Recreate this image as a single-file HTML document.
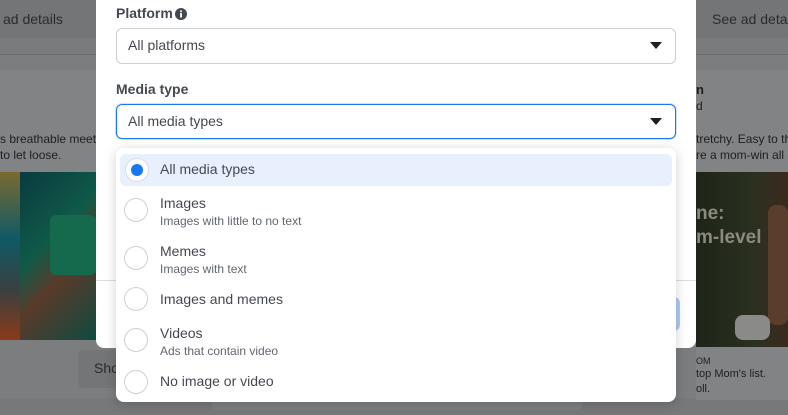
<!DOCTYPE html>
<html><head><meta charset="utf-8"><style>
*{box-sizing:border-box;margin:0;padding:0}
body{width:788px;height:415px;overflow:hidden;position:relative;background:#7c7d7e;font-family:"Liberation Sans",Arial,sans-serif;color:#1c1e21}
.abs{position:absolute}
.t{font-size:13px;color:#1c1e21;white-space:nowrap}
</style></head><body>
<div class="abs" style="left:0;top:0;width:96px;height:38px;background:#747576"></div>
<div class="abs t" style="left:3px;top:11px;font-size:14px;color:#2a2b2d">ad details</div>
<div class="abs" style="left:0;top:38px;width:96px;height:17px;background:#7a7b7c;border-bottom:1px solid #6c6d6e"></div>
<div class="abs" style="left:0;top:70px;width:96px;height:270px;background:#828384"></div>
<div class="abs t" style="left:0;top:132px;font-size:12px;color:#1e1f21">s breathable meet</div>
<div class="abs t" style="left:0;top:148px;font-size:12px;color:#1e1f21">to let loose.</div>
<div class="abs" style="left:0;top:172px;width:20px;height:168px;background:linear-gradient(#7a6a30,#0e5a66 40%,#3a4040 70%,#8a3a1a)"></div>
<div class="abs" style="left:20px;top:172px;width:76px;height:168px;background:linear-gradient(135deg,#0a3a40,#0f5a48 40%,#5a3a2a 60%,#0e4a40)"></div>
<div class="abs" style="left:50px;top:215px;width:46px;height:60px;background:#156a4d;border-radius:6px"></div>
<div class="abs" style="left:78px;top:350px;width:40px;height:38px;background:#747576;border-radius:6px"></div>
<div class="abs t" style="left:94px;top:360px;font-size:14px;color:#2a2b2d">Sho</div>
<div class="abs" style="left:0;top:398px;width:788px;height:17px;background:#777879"></div>
<div class="abs" style="left:696px;top:0;width:92px;height:38px;background:#747576"></div>
<div class="abs t" style="left:712px;top:11px;font-size:14px;color:#2a2b2d">See ad detai</div>
<div class="abs" style="left:696px;top:38px;width:92px;height:17px;background:#7a7b7c;border-bottom:1px solid #6c6d6e"></div>
<div class="abs" style="left:696px;top:70px;width:92px;height:330px;background:#828384"></div>
<div class="abs t" style="left:696px;top:82px;font-size:13px;font-weight:bold;color:#1e1f21">n</div>
<div class="abs t" style="left:696px;top:99px;font-size:12px;color:#1e1f21">d</div>
<div class="abs t" style="left:696px;top:132px;font-size:12px;color:#1e1f21">tretchy. Easy to th</div>
<div class="abs t" style="left:696px;top:148px;font-size:12px;color:#1e1f21">re a mom-win all a</div>
<div class="abs" style="left:696px;top:172px;width:92px;height:175px;background:linear-gradient(90deg,#1e2418,#2a3020 60%,#3a2a1e)"></div>
<div class="abs" style="left:768px;top:205px;width:20px;height:120px;background:#5a3e2c;border-radius:8px"></div>
<div class="abs" style="left:735px;top:315px;width:35px;height:25px;background:#8a8a88;border-radius:8px"></div>
<div class="abs t" style="left:696px;top:203px;font-size:19px;font-weight:bold;color:#8a8a80">ne:</div>
<div class="abs t" style="left:696px;top:227px;font-size:19px;font-weight:bold;color:#8a8a80">m-level</div>
<div class="abs t" style="left:696px;top:356px;font-size:9px;color:#1e1f21">OM</div>
<div class="abs t" style="left:696px;top:368px;font-size:11px;color:#1e1f21">top Mom's list.</div>
<div class="abs t" style="left:696px;top:383px;font-size:11px;color:#1e1f21">oll.</div>
<div class="abs" style="left:212px;top:398px;width:370px;height:12px;background:#7e7f80;border-radius:4px"></div>
<div class="abs" style="left:96px;top:0;width:600px;height:348px;background:#fff;border-radius:0 0 8px 8px"></div>
<div class="abs" style="left:96px;top:280px;width:600px;height:1px;background:#dadde1"></div>
<div class="abs" style="left:640px;top:297px;width:40px;height:34px;background:#aecbf6;border-radius:6px"></div>
<div class="abs t" style="left:116px;top:5px;font-size:14px;font-weight:bold;color:#444950">Platform</div>
<svg class="abs" style="left:175px;top:8px" width="12" height="12" viewBox="0 0 12 12"><circle cx="6" cy="6" r="6" fill="#444950"/><rect x="5.1" y="5" width="1.8" height="4.5" fill="#fff"/><circle cx="6" cy="3.2" r="1" fill="#fff"/></svg>
<div class="abs" style="left:116px;top:28px;width:560px;height:36px;border:1px solid #ccd0d5;border-radius:6px"></div>
<div class="abs t" style="left:128px;top:37px;font-size:14px;color:#444950">All platforms</div>
<svg class="abs" style="left:650px;top:42px" width="12" height="7"><path d="M0 0H12L6 7Z" fill="#1c1e21"/></svg>
<div class="abs t" style="left:116px;top:81px;font-size:14px;font-weight:bold;color:#444950">Media type</div>
<div class="abs" style="left:116px;top:104px;width:560px;height:35px;border:1px solid #1877f2;border-radius:6px;box-shadow:0 0 0 1px #cfe1fb"></div>
<div class="abs t" style="left:128px;top:113px;font-size:14px;color:#444950">All media types</div>
<svg class="abs" style="left:650px;top:118px" width="12" height="7"><path d="M0 0H12L6 7Z" fill="#1c1e21"/></svg>
<div class="abs" style="left:116px;top:148px;width:560px;height:254px;background:#fff;border-radius:8px;box-shadow:0 2px 12px rgba(0,0,0,.18)"></div>
<div class="abs" style="left:120px;top:154px;width:552px;height:32px;background:#e7f0fc;border-radius:6px"></div>
<div class="abs" style="left:125px;top:158px;width:24px;height:24px;border-radius:50%;background:#fff;border:1px solid #dadde1"></div>
<div class="abs" style="left:131px;top:164px;width:12px;height:12px;border-radius:50%;background:#1877f2"></div>
<div class="abs t" style="left:160px;top:161px;font-size:14px;color:#444950">All media types</div>
<div class="abs" style="left:124px;top:198px;width:24px;height:24px;border-radius:50%;border:1px solid #ccd0d5"></div>
<div class="abs t" style="left:160px;top:195px;font-size:14px;color:#444950">Images</div>
<div class="abs t" style="left:160px;top:214px;font-size:12px;color:#606770">Images with little to no text</div>
<div class="abs" style="left:124px;top:246px;width:24px;height:24px;border-radius:50%;border:1px solid #ccd0d5"></div>
<div class="abs t" style="left:160px;top:243px;font-size:14px;color:#444950">Memes</div>
<div class="abs t" style="left:160px;top:262px;font-size:12px;color:#606770">Images with text</div>
<div class="abs" style="left:124px;top:287px;width:24px;height:24px;border-radius:50%;border:1px solid #ccd0d5"></div>
<div class="abs t" style="left:160px;top:291px;font-size:14px;color:#444950">Images and memes</div>
<div class="abs" style="left:124px;top:328px;width:24px;height:24px;border-radius:50%;border:1px solid #ccd0d5"></div>
<div class="abs t" style="left:160px;top:325px;font-size:14px;color:#444950">Videos</div>
<div class="abs t" style="left:160px;top:344px;font-size:12px;color:#606770">Ads that contain video</div>
<div class="abs" style="left:124px;top:370px;width:24px;height:24px;border-radius:50%;border:1px solid #ccd0d5"></div>
<div class="abs t" style="left:160px;top:373px;font-size:14px;color:#444950">No image or video</div>
</body></html>
